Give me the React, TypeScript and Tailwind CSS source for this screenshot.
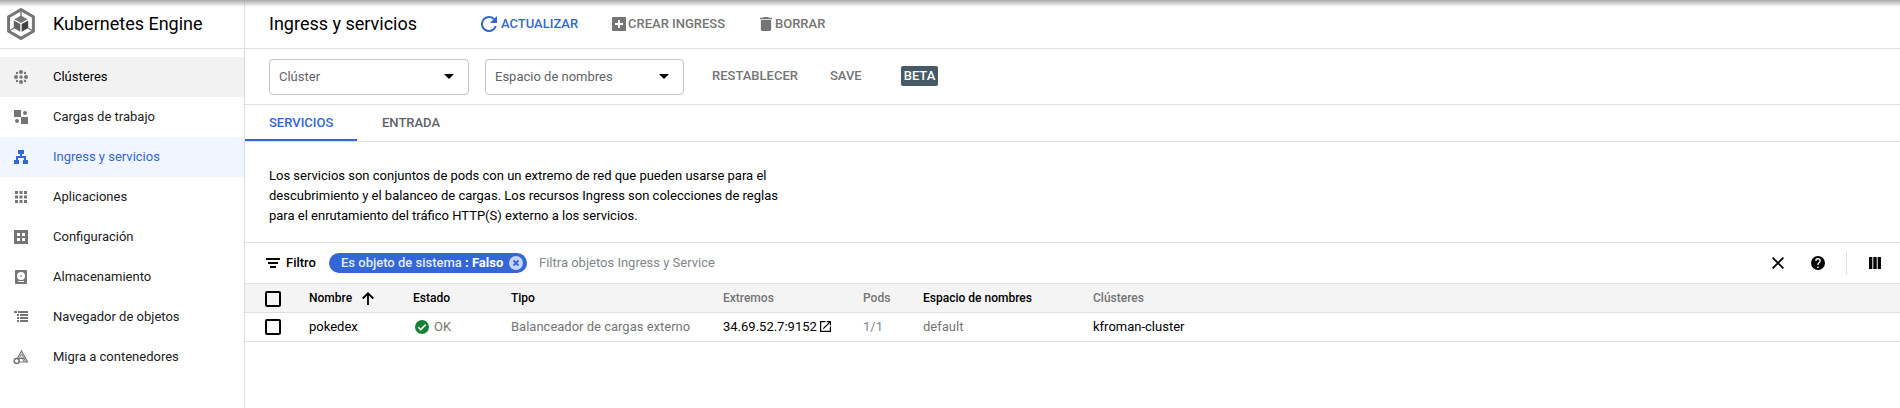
import type { ReactNode } from "react";

function EngineLogo() {
  return (
    <svg viewBox="0 0 28 32" className="h-8 w-7 shrink-0">
      <path d="M14 1.6 26.4 8.8V23.2L14 30.4 1.6 23.2V8.8Z" fill="none" stroke="#757575" strokeWidth="3" strokeLinejoin="round" />
      <path d="M14 1.5V8M2 23l5-3M26 23l-5-3" stroke="#757575" strokeWidth="1.4" />
      <path d="m14 7.6 6.6 3.6L14 14.9l-6.6-3.7Z" fill="#757575" />
      <path d="m6.8 12.4 6.5 3.7v7.6l-6.5-3.8Z" fill="#616161" />
      <path d="m21.2 12.4-6.5 3.7v7.6l6.5-3.8Z" fill="#424242" />
    </svg>
  );
}

function ClustersIcon() {
  return (
    <svg viewBox="0 0 14 14" fill="currentColor" className="size-3.5">
      <circle cx="7" cy="2" r="2" />
      <circle cx="7" cy="12" r="2" />
      <circle cx="2" cy="7" r="2" />
      <circle cx="12" cy="7" r="2" />
      <circle cx="7" cy="7" r="1.7" />
      <circle cx="3" cy="3" r="1.200" />
      <circle cx="11" cy="3" r="1.200" />
      <circle cx="3" cy="11" r="1.200" />
      <circle cx="11" cy="11" r="1.200" />
    </svg>
  );
}

function WorkloadsIcon() {
  return (
    <svg viewBox="0 0 14 14" fill="currentColor" className="size-3.5">
      <path d="M0 0h7v7H0zM7 7h7v7H7z" />
      <circle cx="11" cy="3" r="2" />
      <circle cx="3" cy="11" r="2" />
    </svg>
  );
}

function NetworkIcon() {
  return (
    <svg viewBox="0 0 14 14" fill="currentColor" className="size-3.5">
      <path d="M4 0h6v4H8v2h4v4h2v4H9v-4h1V8H4v2h1v4H0v-4h2V6h4V4H4z" />
    </svg>
  );
}

function AppsIcon() {
  return (
    <svg viewBox="0 0 14 14" fill="currentColor" className="size-3.5">
      <path d="M1 1h3v3H1zM5.500 1h3v3h-3zM10 1h3v3h-3zM1 5.500h3v3H1zM5.500 5.500h3v3h-3zM10 5.500h3v3h-3zM1 10h3v3H1zM5.500 10h3v3h-3zM10 10h3v3h-3z" />
    </svg>
  );
}

function ConfigIcon() {
  return (
    <svg viewBox="0 0 14 14" fill="currentColor" fillRule="evenodd" className="size-3.5">
      <path d="M0 0h14v14H0zM3 3v3h3V3zM8 3v3h3V3zM3 8v3h3V8zM8 8v3h3V8z" />
    </svg>
  );
}

function StorageIcon() {
  return (
    <svg viewBox="0 0 14 14" fill="currentColor" fillRule="evenodd" className="size-3.5">
      <path d="M2 0h10a1 1 0 0 1 1 1v12a1 1 0 0 1-1 1H2a1 1 0 0 1-1-1V1a1 1 0 0 1 1-1ZM7 2a4 4 0 1 0 0 8 4 4 0 0 0 0-8ZM4 11v1h6v-1zM7 5.200a.9.9 0 1 1 0 1.800.9.9 0 0 1 0-1.800Z" />
    </svg>
  );
}

function BrowserIcon() {
  return (
    <svg viewBox="0 0 14 14" fill="currentColor" className="size-3.5">
      <path d="M0 1h3v2H0zM4 1h10v2H4zM3 4h2v2H3zM6 4h8v2H6zM3 7h2v2H3zM6 7h8v2H6zM3 10h2v2H3zM6 10h8v2H6z" />
    </svg>
  );
}

function MigrateIcon() {
  return (
    <svg viewBox="0 0 16 16" className="-mx-px size-4" fill="none" stroke="currentColor">
      <path d="M4 10 8.500 2l6 11H7" strokeWidth="1.200" />
      <path d="m8.500 5-2.500 5M8.500 5l4 7.500M8.500 8l2.500 4.500M5.500 9.500h6" strokeWidth="1" />
      <circle cx="3.700" cy="12" r="2.500" strokeWidth="1.600" />
    </svg>
  );
}

function RefreshIcon() {
  return (
    <svg viewBox="4 4 16 16" fill="currentColor" className="size-4">
      <path d="M17.650 6.350A7.960 7.960 0 0 0 12 4a8 8 0 1 0 7.730 10h-2.080A6 6 0 1 1 12 6c1.660 0 3.140.69 4.220 1.780L13 11h7V4z" />
    </svg>
  );
}

function AddBoxIcon() {
  return (
    <svg viewBox="0 0 14 14" fill="currentColor" fillRule="evenodd" className="size-3.5">
      <path d="M.5 0h13l.5.5v13l-.5.5H.5l-.5-.5V.5ZM6 3v3H3v2h3v3h2V8h3V6H8V3z" />
    </svg>
  );
}

function TrashIcon() {
  return (
    <svg viewBox="5 3 14 18" preserveAspectRatio="none" fill="currentColor" className="h-3.5 w-3">
      <path d="M6 19c0 1.100.9 2 2 2h8c1.100 0 2-.9 2-2V7H6zM19 4h-3.500l-1-1h-5l-1 1H5v2h14z" />
    </svg>
  );
}

function CaretIcon() {
  return (
    <svg viewBox="0 0 10 5" className="h-[5px] w-2.5">
      <path d="M0 0h10L5 5z" fill="#000" />
    </svg>
  );
}

const navItems: { label: string; icon: ReactNode; row?: string }[] = [
  { label: "Clústeres", icon: <ClustersIcon />, row: "bg-[#f2f2f2]" },
  { label: "Cargas de trabajo", icon: <WorkloadsIcon /> },
  { label: "Ingress y servicios", icon: <NetworkIcon />, row: "bg-[#f0f5ff] text-[#3367d6]" },
  { label: "Aplicaciones", icon: <AppsIcon /> },
  { label: "Configuración", icon: <ConfigIcon /> },
  { label: "Almacenamiento", icon: <StorageIcon /> },
  { label: "Navegador de objetos", icon: <BrowserIcon /> },
  { label: "Migra a contenedores", icon: <MigrateIcon /> },
];

function Sidebar() {
  return (
    <aside className="flex w-[245px] shrink-0 flex-col border-r border-[#dadce0]">
      <div className="flex h-[49px] items-center border-b border-[#e0e0e0] pl-[7px]">
        <EngineLogo />
        <h1 className="ml-[18px] text-[18px] leading-6">Kubernetes Engine</h1>
      </div>
      <nav className="pt-2">
        {navItems.map(({ label, icon, row }) => (
          <a
            key={label}
            className={`flex h-10 items-center pl-3.5 text-[13px] ${row ?? "text-[#212121]"}`}
          >
            <span className={`mr-[25px] ${label === "Ingress y servicios" ? "" : "text-[#757575]"}`}>{icon}</span>
            {label}
          </a>
        ))}
      </nav>
    </aside>
  );
}

function Toolbar() {
  return (
    <header className="flex h-[49px] items-center border-b border-[#e0e0e0] pl-6 text-[13px] font-medium text-[#757575]">
      <h2 className="w-[212px] text-[18px] leading-6 font-normal text-black">Ingress y servicios</h2>
      <button className="flex w-[131px] items-center gap-1 text-[#3367d6]">
        <RefreshIcon />
        ACTUALIZAR
      </button>
      <button className="flex w-[148px] items-center gap-0.5">
        <AddBoxIcon />
        CREAR INGRESS
      </button>
      <button className="flex items-center gap-[3px]">
        <TrashIcon />
        BORRAR
      </button>
    </header>
  );
}

function Select({ label }: { label: string }) {
  return (
    <button className="flex h-9 grow items-center justify-between rounded-[4px] border border-[#c4c4c4] pr-3.5 pl-[9px] text-[13px] text-[#5f6368]">
      {label}
      <CaretIcon />
    </button>
  );
}

function Scope() {
  return (
    <div className="flex h-14 items-center border-b border-[#e0e0e0] pl-6 text-[13px] font-medium text-[#757575]">
      <div className="grid w-[415px] grid-cols-[200px_199px] gap-4 font-normal">
        <Select label="Clúster" />
        <Select label="Espacio de nombres" />
      </div>
      <button className="ml-7 w-[118px] pb-0.5 text-left">RESTABLECER</button>
      <button className="w-[71px] pb-0.5 text-left">SAVE</button>
      <span className="mb-0.5 flex h-5 w-[37px] items-center justify-center rounded-[2px] bg-[#455a64] text-white">BETA</span>
    </div>
  );
}

function Tabs() {
  return (
    <div className="flex h-[37px] items-stretch border-b border-[#e0e0e0] text-[13px] font-medium">
      <button className="flex w-28 items-center border-b-2 border-[#3367d6] pt-0.5 pl-6 text-[#3367d6]">SERVICIOS</button>
      <button className="flex items-center pl-[25px] text-[#5f6368]">ENTRADA</button>
    </div>
  );
}

function FilterBar() {
  return (
    <div className="flex h-[41px] items-center border-b border-[#e0e0e0] pl-[21px] text-[13px]">
      <svg viewBox="0 0 14 10" className="mr-1.5 h-2.5 w-3.5" fill="#000">
        <path d="M0 0h14v2H0zM2 4h10v2H2zM4 8h6v2H4z" />
      </svg>
      <span className="w-[43px] font-medium">Filtro</span>
      <span className="flex h-5 w-[198px] items-center rounded-full bg-[#3367d6] pl-3 whitespace-pre text-white">
        <span className="font-medium text-[#e3ebfb]">Es objeto de sistema </span>
        <span className="font-bold">: Falso</span>
        <svg viewBox="0 0 14 14" className="ml-1.5 size-3.5">
          <circle cx="7" cy="7" r="7" fill="#c6d5f5" />
          <path d="m4.500 4.500 5 5m0-5-5 5" stroke="#3367d6" strokeWidth="1.800" />
        </svg>
      </span>
      <span className="ml-3 text-[#80868b]">Filtra objetos Ingress y Service</span>
      <div className="ml-auto flex items-center pr-[19px]">
        <svg viewBox="0 0 12 12" className="size-3" stroke="#000" strokeWidth="1.800">
          <path d="m.6.6 10.800 10.800m0-10.800L.6 11.400" />
        </svg>
        <svg viewBox="2 2 20 20" className="ml-[27px] size-3.5">
          <path d="M12 2a10 10 0 1 0 0 20 10 10 0 0 0 0-20zm1 17h-2v-2h2zm2.070-7.750-.9.920C13.450 12.900 13 13.500 13 15h-2v-.5c0-1.100.45-2.100 1.170-2.830l1.240-1.260c.37-.36.59-.86.59-1.410a2 2 0 1 0-4 0H8a4 4 0 1 1 8 0c0 .88-.36 1.680-.93 2.250z" />
        </svg>
        <span className="ml-[21px] h-6 w-px bg-[#e0e0e0]" />
        <svg viewBox="0 0 12 12" className="ml-[22px] size-3">
          <path d="M0 0h3.300v12H0zM4.300 0h3.400v12H4.300zM8.700 0H12v12H8.700z" />
        </svg>
      </div>
    </div>
  );
}

function Checkbox() {
  return <span className="block size-4 rounded-[2px] border-2 border-black" />;
}

const columns = "grid grid-cols-[44px_104px_98px_212px_140px_60px_170px_1fr] items-center border-b border-[#e0e0e0] pl-5";

function ServicesTable() {
  return (
    <section>
      <div className={`${columns} h-[29px] bg-[#f4f4f4] text-[12px] font-medium`}>
        <span className="pt-0.5"><Checkbox /></span>
        <span className="flex items-center">
          Nombre
          <svg viewBox="0 0 12 13" className="ml-2.5 h-[13px] w-3" fill="none" stroke="#000" strokeWidth="1.800">
            <path d="M6 13V1.500M.7 6.500 6 1.300l5.300 5.200" />
          </svg>
        </span>
        <span>Estado</span>
        <span>Tipo</span>
        <span className="text-[#757575]">Extremos</span>
        <span className="text-[#757575]">Pods</span>
        <span>Espacio de nombres</span>
        <span className="text-[#757575]">Clústeres</span>
      </div>
      <div className={`${columns} h-[29px] text-[13px] text-[#757575]`}>
        <span><Checkbox /></span>
        <span className="text-black">pokedex</span>
        <span className="flex items-center gap-[5px] pl-0.5">
          <svg viewBox="0 0 14 14" className="mb-px size-3.5">
            <circle cx="7" cy="7" r="7" fill="#188038" />
            <path d="m3.300 7.200 2.400 2.400 5-5" fill="none" stroke="#fff" strokeWidth="1.500" />
          </svg>
          OK
        </span>
        <span>Balanceador de cargas externo</span>
        <span className="flex items-center gap-[3px] text-black">
          34.69.52.7:9152
          <svg viewBox="3 3 18 18" className="mb-px size-[11px]">
            <path d="M19 19H5V5h7V3H3v18h18v-9h-2zM14 3v2h3.590l-9.830 9.830 1.410 1.410L19 6.410V10h2V3z" />
          </svg>
        </span>
        <span className="text-[#80868b]">1/1</span>
        <span>default</span>
        <span className="text-black">kfroman-cluster</span>
      </div>
    </section>
  );
}

export default function App() {
  return (
    <div className="relative flex h-[408px] overflow-hidden bg-white font-[Roboto,sans-serif] text-black">
      <div className="pointer-events-none absolute inset-x-0 top-0 h-[7px] bg-linear-to-b from-[#aaaaaa] to-transparent" />
      <Sidebar />
      <main className="flex min-w-0 grow flex-col">
        <Toolbar />
        <Scope />
        <Tabs />
        <p className="h-[101px] border-b border-[#e0e0e0] pt-6 pl-6 text-[13px] leading-5">
          Los servicios son conjuntos de pods con un extremo de red que pueden usarse para el
          <br />
          descubrimiento y el balanceo de cargas. Los recursos Ingress son colecciones de reglas
          <br />
          para el enrutamiento del tráfico HTTP(S) externo a los servicios.
        </p>
        <FilterBar />
        <ServicesTable />
      </main>
    </div>
  );
}
